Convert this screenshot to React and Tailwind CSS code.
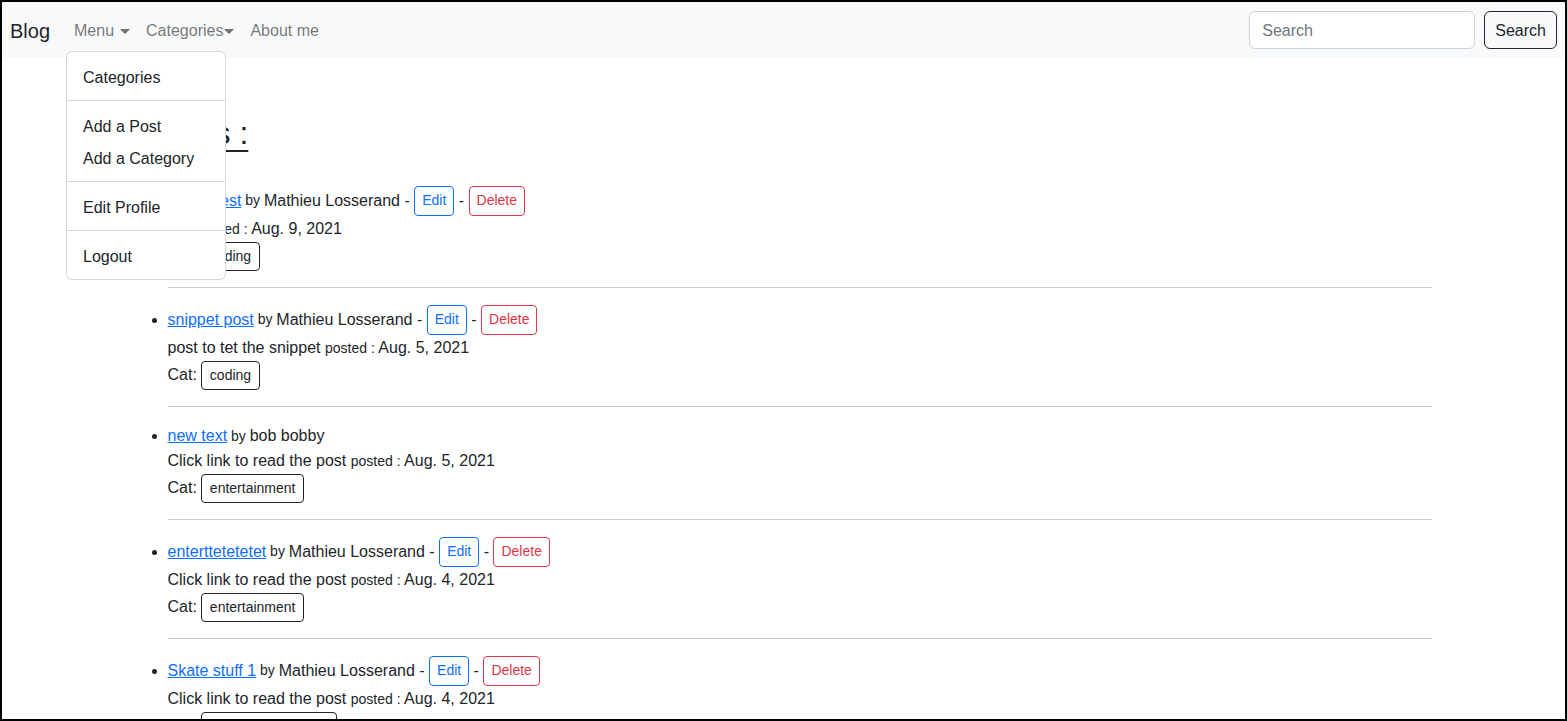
const POSTS = [
  { title: "A new test", author: "Mathieu Losserand", body: "test", date: "Aug. 9, 2021", cat: "coding", owner: true },
  { title: "snippet post", author: "Mathieu Losserand", body: "post to tet the snippet", date: "Aug. 5, 2021", cat: "coding", owner: true },
  { title: "new text", author: "bob bobby", body: "Click link to read the post", date: "Aug. 5, 2021", cat: "entertainment", owner: false },
  { title: "enterttetetetet", author: "Mathieu Losserand", body: "Click link to read the post", date: "Aug. 4, 2021", cat: "entertainment", owner: true },
  { title: "Skate stuff 1", author: "Mathieu Losserand", body: "Click link to read the post", date: "Aug. 4, 2021", cat: "skateboarding stuff", owner: true },
];

const MENU = [["Categories"], ["Add a Post", "Add a Category"], ["Edit Profile"], ["Logout"]];

function Caret({ className = "" }) {
  return (
    <svg width="10" height="5" viewBox="0 0 10 5" className={className} aria-hidden>
      <path d="M0 0h10L5 5z" fill="currentColor" />
    </svg>
  );
}

function Navbar() {
  return (
    <nav className="flex h-[56px] items-center bg-[#f8f9fa] pl-2 pr-2">
      <span className="mr-4 pt-[2px] text-[20px] text-[#212529]">Blog</span>
      <div className="flex items-center pt-[2px] text-[16px] text-black/55">
        <span className="flex items-center px-2">
          Menu
          <Caret className="ml-[6px]" />
        </span>
        <span className="flex items-center px-2">
          Categories
          <Caret className="ml-px" />
        </span>
        <span className="px-2">About me</span>
      </div>
      <div className="ml-auto flex items-center">
        <div className="mr-[9px] flex h-[38px] w-[226px] items-center rounded-md border border-[#ced4da] bg-white px-3 pt-[2px] text-[16px] text-[#6c757d]">
          Search
        </div>
        <button className="h-[38px] rounded-md border border-[#212529] px-[10px] pt-[2px] text-[16px] text-[#212529]">
          Search
        </button>
      </div>
    </nav>
  );
}

function Dropdown() {
  return (
    <div className="absolute left-[64px] top-[49px] w-[160px] rounded-md border border-black/15 bg-white py-2 text-[16px] text-[#212529]">
      {MENU.map((group, i) => (
        <div key={i}>
          {i > 0 && <div className="my-2 border-t border-black/15" />}
          {group.map((item) => (
            <div key={item} className="flex h-8 items-center px-4 pt-[4px]">
              {item}
            </div>
          ))}
        </div>
      ))}
    </div>
  );
}

function Post({ post }) {
  return (
    <li>
      <div
        className={
          post.owner
            ? "flex h-[31px] items-center whitespace-pre"
            : "flex h-[25px] items-center whitespace-pre pt-[1px]"
        }
      >
        <a className="text-[#0d6efd] underline">{post.title}</a>
        <small className="text-[14px]"> by </small>
        <span>{post.author}</span>
        {post.owner && (
          <>
            <span> - </span>
            <span className="inline-flex h-[30px] items-center rounded border border-[#0d6efd] px-[7px] text-[14px] text-[#0d6efd]">
              Edit
            </span>
            <span> - </span>
            <span className="inline-flex h-[30px] items-center rounded border border-[#dc3545] px-[7px] text-[14px] text-[#dc3545]">
              Delete
            </span>
          </>
        )}
      </div>
      <div className="h-[25px] pt-[1px] leading-6">
        {post.body} <small className="text-[14px]">posted :</small> {post.date}
      </div>
      <div className="flex h-[30px] items-center">
        Cat:
        <span className="ml-1 inline-flex h-[29px] items-center rounded border border-[#212529] px-2 text-[14px]">
          {post.cat}
        </span>
      </div>
      <hr className="my-4 border-t border-[#c8c9ca]" />
    </li>
  );
}

export default function App() {
  return (
    <div
      className="relative h-[721px] w-[1567px] overflow-hidden border-2 border-black bg-white text-[16px] text-[#212529]"
      style={{ fontFamily: '"Liberation Sans", Arial, sans-serif' }}
    >
      <Navbar />
      <main className="mx-auto w-[1320px] px-3">
        <h2 className="mt-[56px] ml-[15px] text-[32px] font-medium leading-[1.2] underline decoration-[2px] underline-offset-[6px]">
          Posts :
        </h2>
        <ul className="mt-[33px] list-disc pl-8">
          {POSTS.map((p) => (
            <Post key={p.title} post={p} />
          ))}
        </ul>
      </main>
      <Dropdown />
    </div>
  );
}
